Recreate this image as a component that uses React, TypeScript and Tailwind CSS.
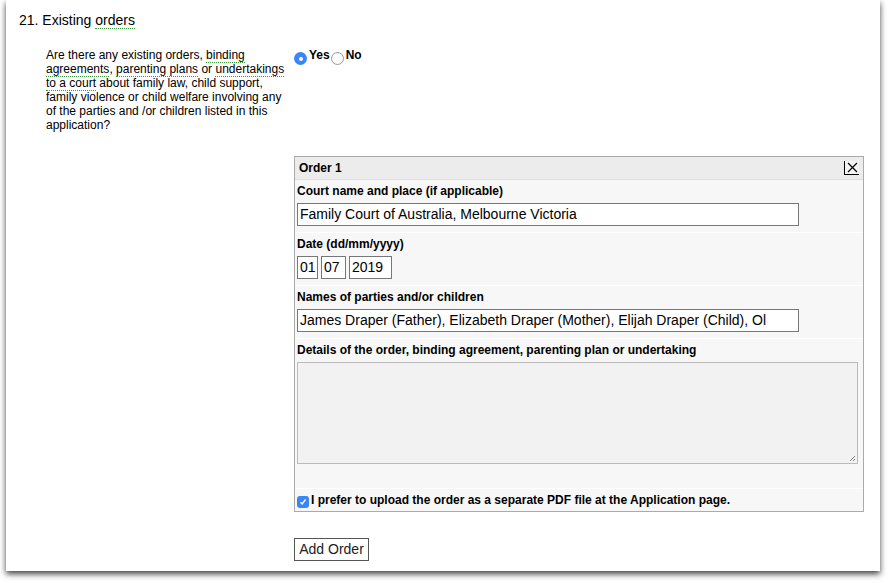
export default function App() {
  const dot = "border-b border-dotted border-[#3a9a3a]";
  return (
    <div className="w-[888px] h-[583px] bg-white" style={{ fontFamily: '"Liberation Sans", Arial, sans-serif' }}>
      <div className="ml-[6px] w-[874px] h-[571px] bg-white shadow-[0_3px_6px_rgba(0,0,0,0.75)] relative text-black">
        <div className="pt-[11px] pl-[13px] text-[14px] leading-[18px]">
          21. Existing <span className={dot}>orders</span>
        </div>
        <div className="flex mt-[19px]">
          <div className="ml-[40px] w-[246px] text-[12px] leading-[14px]">
            Are there any existing orders, <span className={dot}>binding</span> <span className={dot}>agreements</span>, <span className={dot}>parenting plans</span> or <span className={dot}>undertakings</span> <span className={dot}>to a court</span> about family law, child support, family violence or child welfare involving any of the parties and /or children listed in this application?
          </div>
          <div className="ml-[2px] flex items-start text-[12px] font-bold leading-[14px]">
            <span className="mt-[4px] w-[13px] h-[13px] rounded-full bg-[#3b86f7] flex items-center justify-center"><span className="w-[4px] h-[4px] rounded-full bg-white" /></span>
            <span className="ml-[2px]">Yes</span>
            <span className="mt-[4px] ml-[1px] w-[13px] h-[13px] rounded-full border border-[#999] bg-white" />
            <span className="ml-[2px]">No</span>
          </div>
        </div>
        <div className="ml-[288px] mt-[24px] w-[570px] border border-[#aaa] text-[12px] font-bold leading-[14px]">
          <div className="h-[23px] bg-[#ececec] flex items-center justify-between pl-[4px] pr-[4px] border-b border-[#ddd]">
            <span>Order 1</span>
            <span className="w-[15px] h-[14px] border-b border-l border-black bg-[#f4f4f4] flex items-center justify-center">
              <svg width="11" height="11" viewBox="0 0 11 11"><path d="M1 1L10 10M10 1L1 10" stroke="black" strokeWidth="1.2" /></svg>
            </span>
          </div>
          <div className="bg-[#f7f7f7] px-[2px] pt-[4px] pb-[6px] border-b border-white">
            <div>Court name and place (if applicable)</div>
            <div className="mt-[5px] w-[502px] h-[23px] border border-[#777] bg-white text-[14px] font-normal leading-[21px] px-[2px]">Family Court of Australia, Melbourne Victoria</div>
          </div>
          <div className="bg-[#f7f7f7] px-[2px] pt-[4px] pb-[6px] border-b border-white">
            <div>Date (dd/mm/yyyy)</div>
            <div className="mt-[5px] flex gap-[3px] text-[14px] font-normal leading-[21px]">
              <div className="w-[21px] h-[23px] border border-[#777] bg-white px-[2px]">01</div>
              <div className="w-[25px] h-[23px] border border-[#777] bg-white px-[2px]">07</div>
              <div className="w-[43px] h-[23px] border border-[#777] bg-white px-[2px]">2019</div>
            </div>
          </div>
          <div className="bg-[#f7f7f7] px-[2px] pt-[4px] pb-[6px] border-b border-white">
            <div>Names of parties and/or children</div>
            <div className="mt-[5px] w-[502px] h-[23px] border border-[#777] bg-white text-[14px] font-normal leading-[21px] px-[2px] overflow-hidden whitespace-nowrap">James Draper (Father), Elizabeth Draper (Mother), Elijah Draper (Child), Ol</div>
          </div>
          <div className="bg-[#f7f7f7] px-[2px] pt-[4px] pb-[24px] border-b border-white">
            <div>Details of the order, binding agreement, parenting plan or undertaking</div>
            <div className="mt-[5px] w-[561px] h-[102px] border border-[#bbb] bg-[#f2f2f2] relative">
              <svg className="absolute right-[1px] bottom-[1px]" width="7" height="7" viewBox="0 0 7 7"><path d="M6 1L1 6M6 4L4 6" stroke="#666" strokeWidth="0.8" /></svg>
            </div>
          </div>
          <div className="bg-[#f7f7f7] px-[2px] h-[22px] flex items-center">
            <span className="w-[12px] h-[12px] rounded-[3px] bg-[#3b86f7] flex items-center justify-center mt-[3px]">
              <svg width="8" height="8" viewBox="0 0 8 8"><path d="M1.5 4.2L3.2 6L6.5 1.5" stroke="white" strokeWidth="1.3" fill="none" /></svg>
            </span>
            <span className="ml-[2px]">I prefer to upload the order as a separate PDF file at the Application page.</span>
          </div>
        </div>
        <div className="ml-[288px] mt-[26px] w-[75px] h-[23px] border border-[#555] text-[14px] leading-[21px] text-center text-[#222]">Add Order</div>
      </div>
    </div>
  );
}
